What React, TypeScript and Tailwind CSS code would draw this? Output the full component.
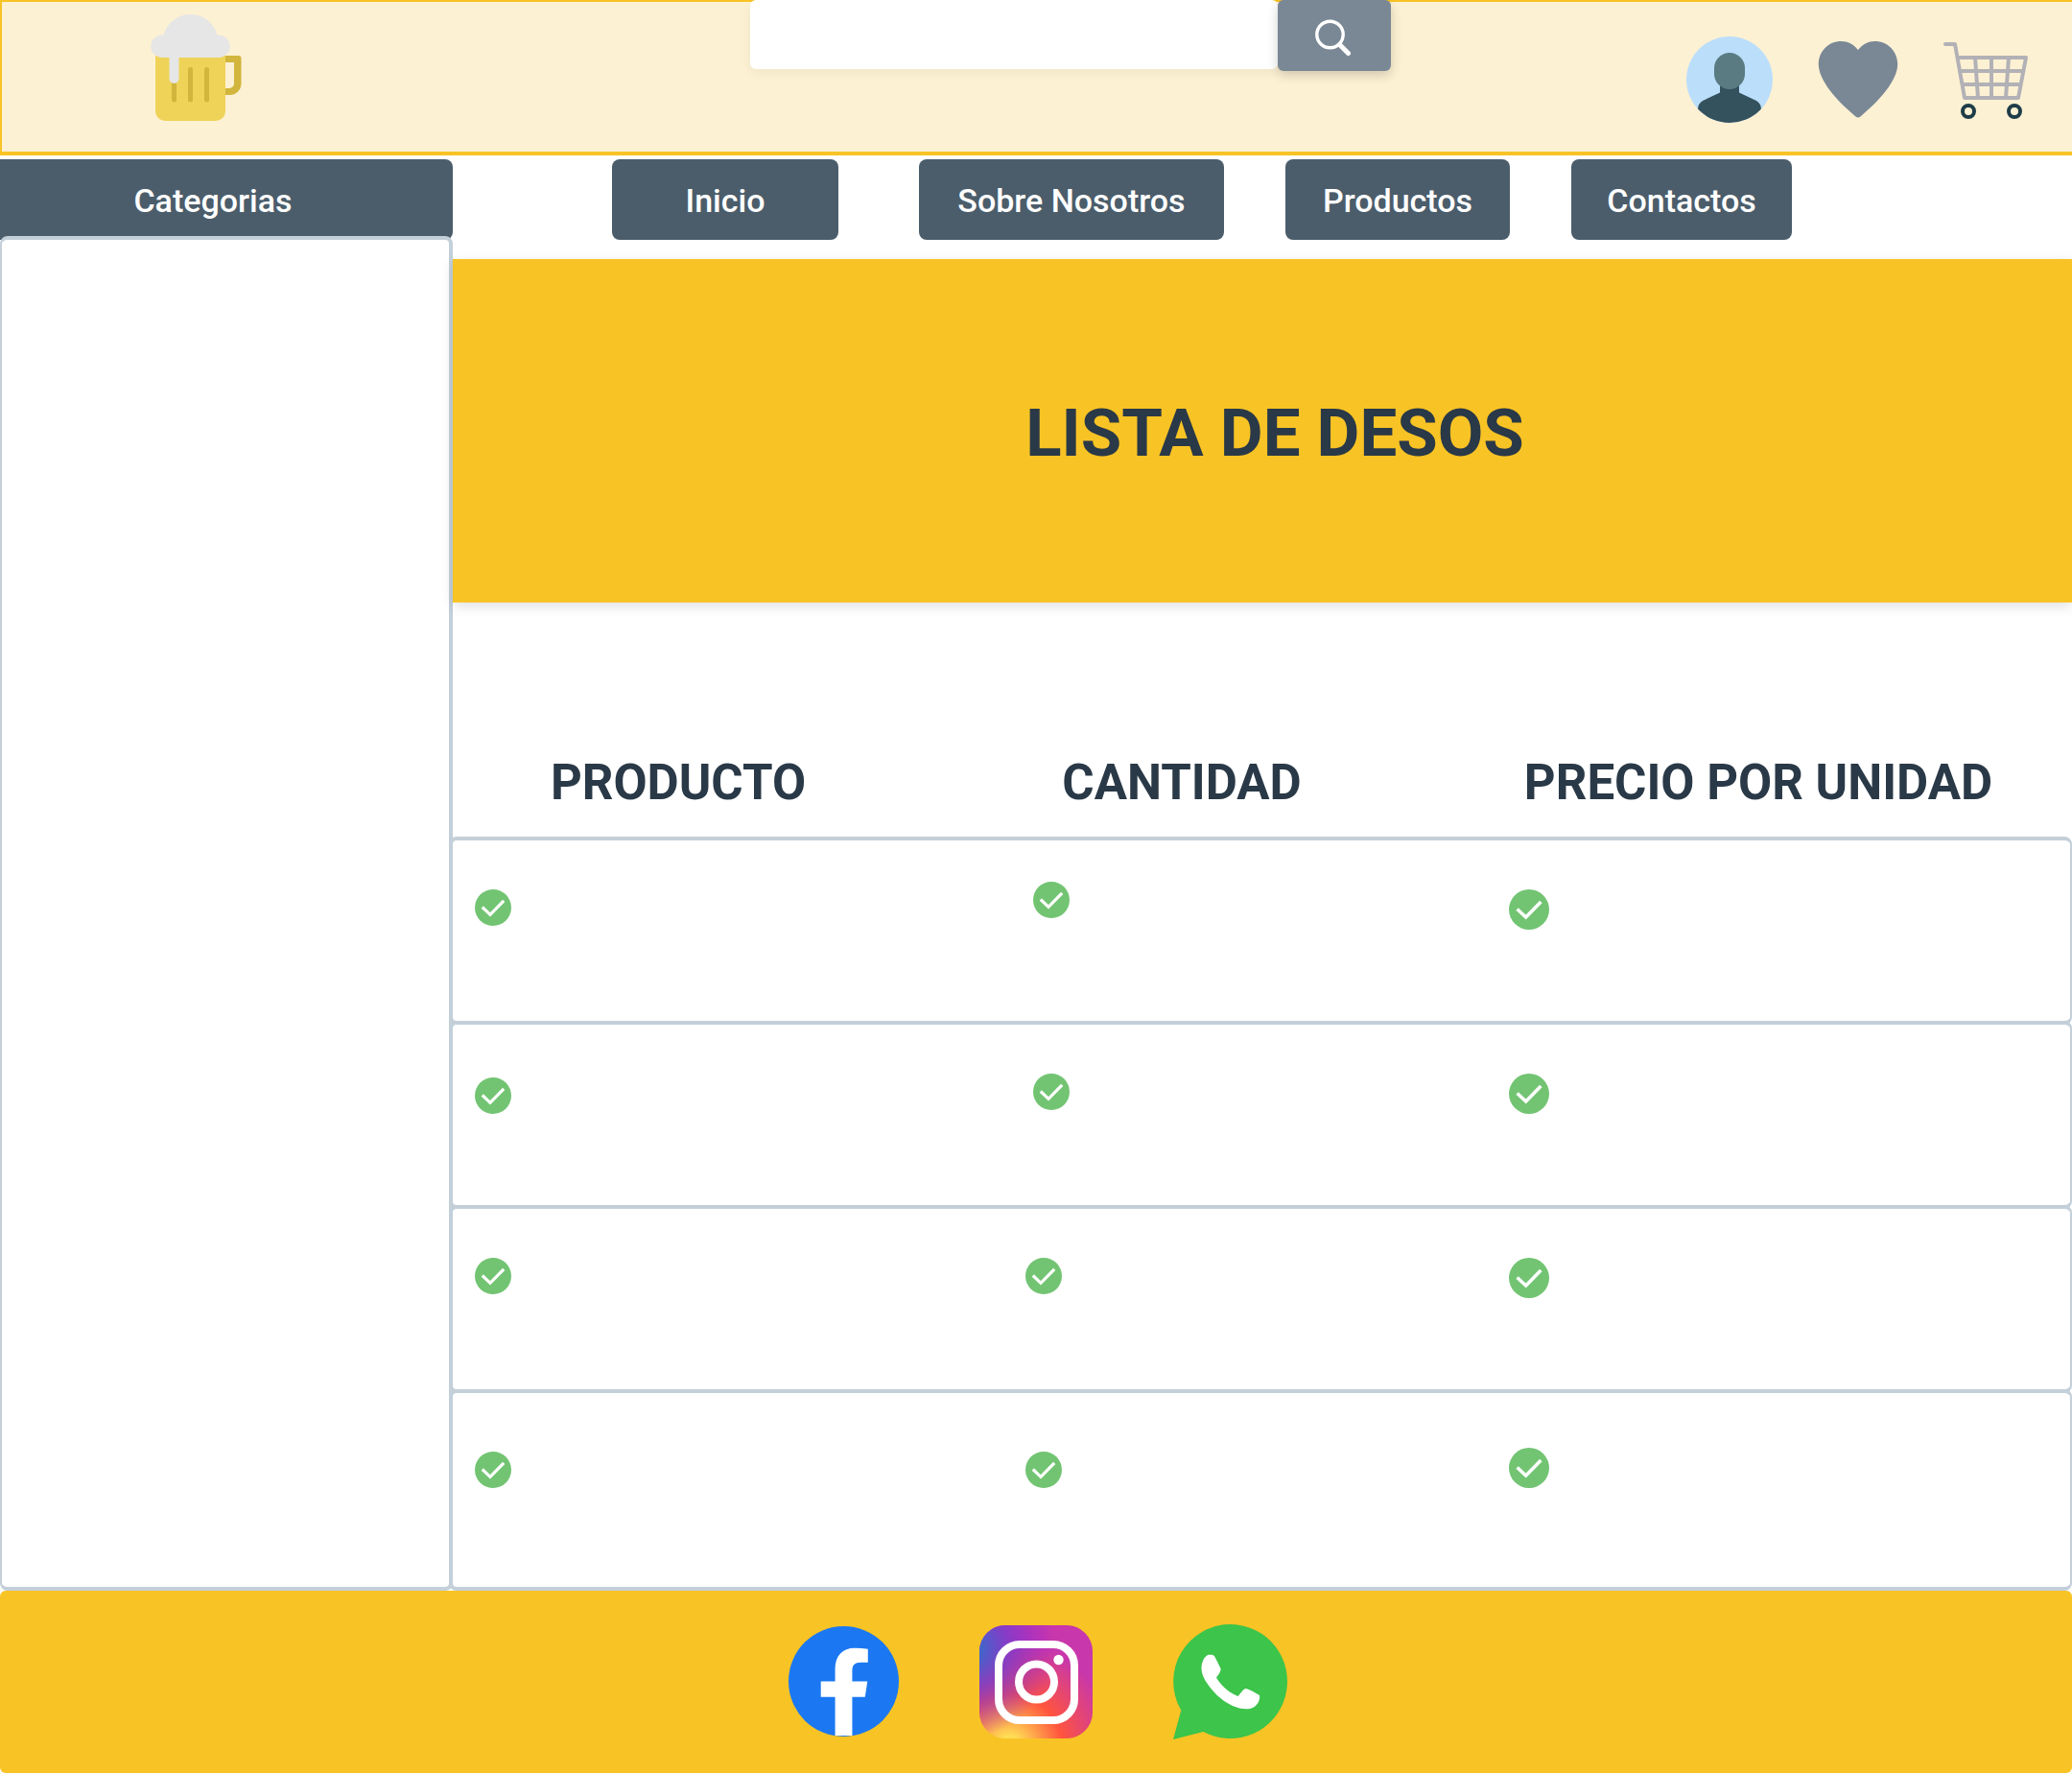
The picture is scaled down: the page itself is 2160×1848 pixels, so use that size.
import React from "react";

type IconProps = { className?: string };

function BeerIcon() {
  return (
    <svg viewBox="0 0 96 114" className="h-[114px] w-24" aria-hidden="true">
      <path d="M77 44H91.500a3 3 0 0 1 3 3V73a12 12 0 0 1-12 12H77V78h5a5 5 0 0 0 5-5V51H77Z" fill="#d1b53c" />
      <path d="M5 35H78V102a10 10 0 0 1-10 10H15a10 10 0 0 1-10-10Z" fill="#efd358" />
      <path d="M24.500 70V90M41.500 58.500V90M58.500 58.500V90" stroke="#d1b53c" strokeWidth="5" strokeLinecap="round" />
      <path d="M19.500 44H29.500V68a5 5 0 0 1-10 0Z" fill="#e6e6e6" />
      <path d="M12 22.500H13.500A29 29 0 0 1 69.500 22.500H71a11.750 11.750 0 0 1 0 23.500H12a11.750 11.750 0 0 1 0-23.500Z" fill="#e6e6e6" />
    </svg>
  );
}

function SearchIcon() {
  return (
    <svg viewBox="0 0 38 40" className="h-10 w-[38px]" fill="none" stroke="#fff" aria-hidden="true">
      <circle cx="15.500" cy="16" r="13.700" strokeWidth="3.400" />
      <path d="M25.500 26.500 34.500 35.500" strokeWidth="5" strokeLinecap="round" />
    </svg>
  );
}

function UserIcon() {
  return (
    <svg viewBox="0 0 90 90" className="size-[90px]" aria-hidden="true">
      <clipPath id="user-disc">
        <circle cx="45" cy="45" r="45" />
      </clipPath>
      <g clipPath="url(#user-disc)">
        <rect width="90" height="90" fill="#bbdefb" />
        <path d="M35 48H55V58.500L73 67Q78 70 78 76V90H12V76Q12 70 17 67L35 58.500Z" fill="#34515e" />
        <rect x="29" y="17" width="32" height="38" rx="16" fill="#5a7b82" />
      </g>
    </svg>
  );
}

function HeartIcon() {
  return (
    <svg viewBox="0 0 84 80" className="h-20 w-[84px]" aria-hidden="true">
      <path
        d="M42 9C37 3 31.500 0 24.500 0 11 0 .8 10.500.8 24 .8 41 20 62 39.500 78.500Q42 80.500 44.500 78.500C64 62 83.200 41 83.200 24 83.200 10.500 73 0 59.500 0 52.500 0 47 3 42 9Z"
        fill="#7a8896"
      />
    </svg>
  );
}

function CartIcon() {
  return (
    <svg viewBox="0 0 88 80" className="h-20 w-[88px]" fill="none" aria-hidden="true">
      <path
        d="M2 2H12L22 58H78L86 16H15M18 30H82M20 44H80M33 16 36 58M50 16V58M68 16 65 58"
        stroke="#b2b1b6"
        strokeWidth="4"
        strokeLinecap="round"
        strokeLinejoin="round"
      />
      <circle cx="26" cy="72" r="6" stroke="#1f3d48" strokeWidth="4" />
      <circle cx="74" cy="72" r="6" stroke="#1f3d48" strokeWidth="4" />
    </svg>
  );
}

function CheckIcon({ className }: IconProps) {
  return (
    <svg viewBox="0 0 38 38" className={className} role="img" aria-label="Disponible">
      <circle cx="19" cy="19" r="19" fill="#72c472" />
      <path d="M7.800 18.500 16 26.300 30.200 11.800" fill="none" stroke="#fff" strokeWidth="3.200" />
    </svg>
  );
}

function FacebookIcon() {
  return (
    <svg viewBox="0 0 116 116" className="size-[115px]" aria-hidden="true">
      <circle cx="58" cy="58" r="58" fill="#1b78f2" />
      <path d="M49 115V74.500H34V58H49V45C49 31 57 23 69.500 23Q77 23 83.500 24V38H76C69.500 38 67 41 67 46.500V58H83L80.500 74.500H67V115Z" fill="#fff" />
    </svg>
  );
}

function InstagramIcon() {
  return (
    <svg viewBox="0 0 118 118" className="size-[118px]" aria-hidden="true">
      <defs>
        <radialGradient id="ig-warm" gradientUnits="userSpaceOnUse" cx="31" cy="127" r="115">
          <stop offset="0" stopColor="#ffdd55" />
          <stop offset="0.100" stopColor="#ffdd55" />
          <stop offset="0.480" stopColor="#ff543e" />
          <stop offset="0.950" stopColor="#c837ab" />
        </radialGradient>
        <radialGradient
          id="ig-cool"
          gradientUnits="userSpaceOnUse"
          cx="0"
          cy="0"
          r="1"
          gradientTransform="matrix(88 0 0 92 -10 24)"
        >
          <stop offset="0" stopColor="#3771c8" />
          <stop offset="0.120" stopColor="#3f66cb" />
          <stop offset="0.450" stopColor="#7a3dcb" stopOpacity="0.850" />
          <stop offset="1" stopColor="#8a20e0" stopOpacity="0" />
        </radialGradient>
      </defs>
      <rect width="118" height="118" rx="27" fill="url(#ig-warm)" />
      <rect width="118" height="118" rx="27" fill="url(#ig-cool)" />
      <rect x="20" y="20" width="79" height="79" rx="22" fill="none" stroke="#fff" strokeWidth="8" />
      <circle cx="59.500" cy="59" r="18.500" fill="none" stroke="#fff" strokeWidth="8" />
      <circle cx="82.500" cy="36" r="5.200" fill="#fff" />
    </svg>
  );
}

function WhatsappIcon() {
  return (
    <svg viewBox="0 0 120 120" className="size-[120px]" aria-hidden="true">
      <path d="M60 0A59.500 59.500 0 1 1 31.500 112L0 120 8.300 89.500A59.500 59.500 0 0 1 60 0Z" fill="#3cc44b" />
      <path
        d="M36 32C39 31.500 42.500 31.500 43.500 34L49.500 46C50 49 47 53 45 55.500 50 64 58 71.500 67.500 75 70 72.500 73 67.500 75.500 67 79 67.500 86 71.500 90 74 91 80 87 86.500 80 88 66 90 51 80 43 71 35 62 29.500 54 29.500 46 29.500 40 32 34 36 32Z"
        fill="#fff"
      />
    </svg>
  );
}

const links = [
  { label: "Inicio", className: "w-[236px] mr-[84px]" },
  { label: "Sobre Nosotros", className: "w-[318px] mr-16" },
  { label: "Productos", className: "w-[234px] mr-16" },
  { label: "Contactos", className: "w-[230px]" },
];

const rows = [
  ["pt-[51px] pl-[23px]", "pt-[43px] pl-[129px]", "pt-[51px] pl-[55px]"],
  ["pt-[55px] pl-[23px]", "pt-[51px] pl-[129px]", "pt-[51px] pl-[55px]"],
  ["pt-[51px] pl-[23px]", "pt-[51px] pl-[121px]", "pt-[51px] pl-[55px]"],
  ["pt-[61px] pl-[23px]", "pt-[61px] pl-[121px]", "pt-[57px] pl-[55px]"],
];

const columns = "grid grid-cols-[478fr_572fr_642fr]";

export default function App() {
  return (
    <div className="flex min-h-screen flex-col overflow-x-hidden bg-white font-['Roboto',sans-serif] text-[#2a3947]">
      <header className="grid h-[162px] grid-cols-[782fr_668fr_710fr] border-t-2 border-b-4 border-[#f8c325] bg-[#fdf1d3]">
        <div className="border-l-2 border-[#f8c325] pt-3 pl-[155px]">
          <a href="#inicio" aria-label="Inicio" className="block w-24">
            <BeerIcon />
          </a>
        </div>
        <form role="search" className="-mt-0.5 flex items-start" onSubmit={(e) => e.preventDefault()}>
          <input
            type="search"
            aria-label="Buscar"
            className="h-[72px] min-w-0 flex-1 rounded-md bg-white px-6 text-[34px] shadow-[0_4px_12px_rgba(0,0,0,0.05)] outline-none"
          />
          <button
            type="submit"
            aria-label="Buscar"
            className="flex h-[74px] w-[118px] items-center justify-center rounded-md bg-[#7a8896] pt-1.5 pr-0.5 shadow-[0_4px_12px_rgba(0,0,0,0.18)]"
          >
            <SearchIcon />
          </button>
        </form>
        <div className="flex items-start justify-end pt-9 pr-[46px]">
          <a href="#cuenta" aria-label="Cuenta" className="mr-[47px]">
            <UserIcon />
          </a>
          <a href="#deseos" aria-label="Lista de deseos" className="mt-[5px] mr-[47px]">
            <HeartIcon />
          </a>
          <a href="#carrito" aria-label="Carrito" className="mt-1.5">
            <CartIcon />
          </a>
        </div>
      </header>

      <div className="flex flex-1">
        <aside className="flex w-[472px] shrink-0 flex-col pt-1">
          <button type="button" className="h-[84px] rounded-r-lg bg-[#4b5d6b] pt-0.5 pr-7 text-[34px] font-medium text-white">
            Categorias
          </button>
          <div className="-mt-1 flex-1 rounded-lg border-4 border-l-2 border-[#c3cfd9] bg-white" />
        </aside>

        <div className="flex min-w-0 flex-1 flex-col">
          <nav className="flex pt-1 pb-5 pl-[166px]" aria-label="Principal">
            {links.map((link) => (
              <a
                key={link.label}
                href="#"
                className={`flex h-[84px] items-center justify-center rounded-lg bg-[#4b5d6b] pt-0.5 text-[34px] font-medium whitespace-nowrap text-white ${link.className}`}
              >
                {link.label}
              </a>
            ))}
          </nav>

          <div className="flex h-[358px] items-center justify-center bg-[#f8c325] pt-1 pl-[26px] shadow-[0_4px_12px_rgba(0,0,0,0.12)]">
            <h1 className="text-[69px] leading-none font-bold">LISTA DE DESOS</h1>
          </div>

          <table className="-ml-1 flex flex-1 flex-col">
            <thead className="block">
              <tr className={`${columns} pt-[158px] pb-[30px] text-[51px] leading-[60px]`}>
                <th scope="col" className="font-bold">PRODUCTO</th>
                <th scope="col" className="font-bold">CANTIDAD</th>
                <th scope="col" className="pr-3 font-bold whitespace-nowrap">PRECIO POR UNIDAD</th>
              </tr>
            </thead>
            <tbody className="flex flex-1 flex-col">
              {rows.map((cells, i) => (
                <tr
                  key={i}
                  className={`${columns} -mt-1 min-h-[196px] rounded-lg border-4 border-r-2 border-[#c3cfd9] last:flex-1`}
                >
                  {cells.map((cell, j) => (
                    <td key={j} className={cell}>
                      <CheckIcon className={j === 2 ? "size-[42px]" : "size-[38px]"} />
                    </td>
                  ))}
                </tr>
              ))}
            </tbody>
          </table>
        </div>
      </div>

      <footer className="flex h-[190px] items-center justify-center gap-[84px] rounded-md bg-[#f8c325] pb-px pl-1">
        <a href="#facebook" aria-label="Facebook">
          <FacebookIcon />
        </a>
        <a href="#instagram" aria-label="Instagram">
          <InstagramIcon />
        </a>
        <a href="#whatsapp" aria-label="WhatsApp">
          <WhatsappIcon />
        </a>
      </footer>
    </div>
  );
}
